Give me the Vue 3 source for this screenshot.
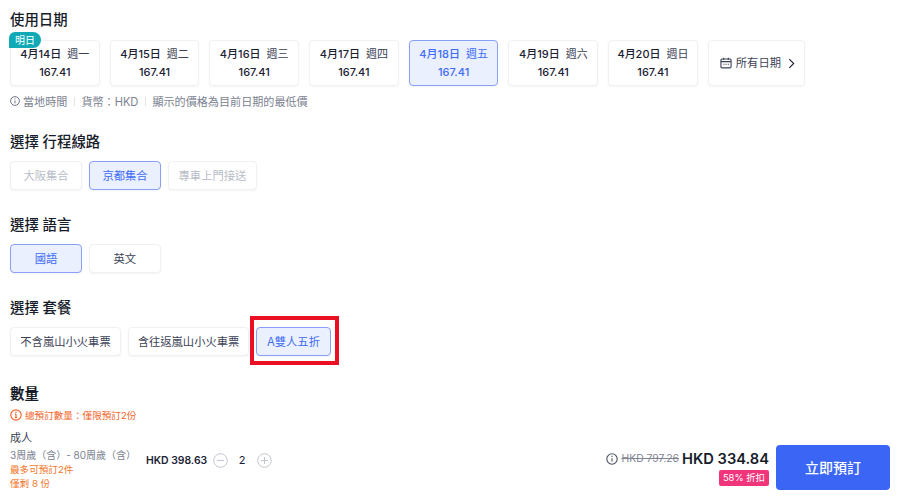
<template>
  <div class="page">
    <section class="date-section">
      <h2 class="title">使用日期</h2>
      <div class="dates">
        <div
          v-for="d in dates"
          :key="d.label"
          class="date-card"
          :class="{ selected: d.selected }"
        >
          <span v-if="d.tag" class="tag">{{ d.tag }}</span>
          <div class="date-label"><b>{{ d.label }}</b><span>{{ d.week }}</span></div>
          <div class="date-price">167.41</div>
        </div>
        <div class="date-card all-dates">
          <svg width="12" height="12" viewBox="0 0 13 13" fill="none" stroke="#3b4256" stroke-width="1.2">
            <rect x="1" y="2.2" width="11" height="9.6" rx="1.2" />
            <path d="M1 5h11M4 .8v2.4M9 .8v2.4" />
            <path d="M3.6 7.8h1.2M6 7.8h1.2M8.4 7.8h1.2" />
          </svg>
          <span>所有日期</span>
          <svg class="chev" width="7" height="11" viewBox="0 0 8 12" fill="none" stroke="#1b2133" stroke-width="1.3">
            <path d="M1.5 1l5 5-5 5" />
          </svg>
        </div>
      </div>
      <div class="note">
        <svg class="info" width="10" height="10" viewBox="0 0 10 10" fill="none" stroke="#6f7687" stroke-width="1">
          <circle cx="5" cy="5" r="4.4" />
          <path d="M5 4.4v3M5 2.4v1" />
        </svg>
        <span>當地時間</span><i></i><span>貨幣：HKD</span><i></i><span>顯示的價格為目前日期的最低價</span>
      </div>
    </section>

    <section class="option-section route">
      <h2 class="title">選擇 行程線路</h2>
      <div class="options">
        <button class="opt disabled w72">大阪集合</button>
        <button class="opt selected w73">京都集合</button>
        <button class="opt disabled w89">專車上門接送</button>
      </div>
    </section>

    <section class="option-section lang">
      <h2 class="title">選擇 語言</h2>
      <div class="options">
        <button class="opt selected w72">國語</button>
        <button class="opt w72">英文</button>
      </div>
    </section>

    <section class="option-section pack">
      <h2 class="title">選擇 套餐</h2>
      <div class="options">
        <button class="opt w111">不含嵐山小火車票</button>
        <button class="opt w122">含往返嵐山小火車票</button>
        <button class="opt selected w75 marked">A雙人五折<span class="red-box"></span></button>
      </div>
    </section>

    <section class="qty-section">
      <h2 class="title">數量</h2>
      <div class="warn">
        <svg width="12" height="12" viewBox="0 0 12 12" fill="none" stroke="#f4662b" stroke-width="1.2">
          <circle cx="6" cy="6" r="5.2" />
          <path d="M6 5.2v3.4M6 2.8v1.2M5 5.2h1M5 8.6h2" />
        </svg>
        <span>總預訂數量：僅限預訂2份</span>
      </div>
      <div class="qty-row">
        <div class="who">
          <div class="who-name">成人</div>
          <div class="who-age">3周歲（含）- 80周歲（含）</div>
          <div class="who-limit">最多可預訂2件</div>
          <div class="who-limit">僅剩 8 份</div>
        </div>
        <div class="unit">HKD 398.63</div>
        <svg class="step" width="15" height="15" viewBox="0 0 15 15" fill="none" stroke="#c3c7d0" stroke-width="1">
          <circle cx="7.5" cy="7.5" r="6.8" />
          <path d="M4 7.5h7" />
        </svg>
        <div class="count">2</div>
        <svg class="step" width="15" height="15" viewBox="0 0 15 15" fill="none" stroke="#c3c7d0" stroke-width="1">
          <circle cx="7.5" cy="7.5" r="6.8" />
          <path d="M4 7.5h7M7.5 4v7" />
        </svg>
        <div class="total">
          <div class="total-line">
            <svg width="12" height="12" viewBox="0 0 12 12" fill="none" stroke="#4a5060" stroke-width="1.1">
              <circle cx="6" cy="6" r="5.2" />
              <path d="M6 5.2v3.4M6 2.8v1.2" />
            </svg>
            <s>HKD 797.26</s>
            <strong>HKD 334.84</strong>
          </div>
          <div class="discount">58% 折扣</div>
        </div>
        <button class="book">立即預訂</button>
      </div>
    </section>
  </div>
</template>

<script setup>
const dates = [
  { label: '4月14日', week: '週一', tag: '明日' },
  { label: '4月15日', week: '週二' },
  { label: '4月16日', week: '週三' },
  { label: '4月17日', week: '週四' },
  { label: '4月18日', week: '週五', selected: true },
  { label: '4月19日', week: '週六' },
  { label: '4月20日', week: '週日' }
]
</script>

<style>
html, body {
  margin: 0;
  background: #fff;
}
</style>

<style scoped>
.page {
  width: 900px;
  height: 500px;
  overflow: hidden;
  box-sizing: border-box;
  padding: 11px 10px 0;
  font-family: Inter, "Noto Sans CJK TC", sans-serif;
  color: #1b2133;
}

.title {
  margin: 0;
  font-size: 14.4px;
  line-height: 18px;
  font-weight: 500;
  color: #171c2b;
}

.dates {
  display: flex;
  gap: 10px;
  margin-top: 11px;
}

.date-card {
  position: relative;
  box-sizing: border-box;
  width: 89.7px;
  height: 46px;
  border: 1px solid #f0f1f4;
  border-radius: 4px;
  box-shadow: 0 1px 2px rgba(30, 40, 70, 0.05);
  text-align: center;
  font-size: 11px;
  line-height: 18px;
  padding-top: 4px;
  background: #fff;
}

.date-card.selected {
  background: #ebf0ff;
  border-color: #88a0f8;
  color: #3e6bf5;
}

.date-label {
  display: flex;
  justify-content: center;
  gap: 6px;
  color: #3b4256;
}

.date-label b {
  font-weight: 500;
  color: #1b2133;
}

.selected .date-label,
.selected .date-label b {
  color: #3e6bf5;
}

.date-price {
  font-weight: 500;
}

.tag {
  position: absolute;
  left: -2px;
  top: -9px;
  width: 32px;
  height: 16px;
  border-radius: 6px 8px 8px 0;
  background: #10a9b5;
  color: #dff7f8;
  font-size: 10px;
  line-height: 16px;
  font-weight: 500;
}

.all-dates {
  width: 97px;
  display: flex;
  align-items: center;
  gap: 4px;
  padding: 0 0 0 11px;
  font-size: 11.3px;
  color: #3b4256;
}

.chev {
  margin-left: 3px;
}

.note {
  display: flex;
  align-items: center;
  margin-top: 8px;
  height: 14px;
  font-size: 11.1px;
  color: #7b8190;
}

.note .info {
  margin-right: 3px;
}

.note i {
  width: 1px;
  height: 9px;
  margin: 0 6.5px;
  background: #e1e3e8;
}

.route { margin-top: 25px; }
.lang { margin-top: 26.3px; }
.pack { margin-top: 26.3px; }

.options {
  display: flex;
  gap: 6.7px;
  margin-top: 9.7px;
}

.opt {
  box-sizing: border-box;
  height: 29px;
  padding: 0;
  border: 1px solid #f0f1f4;
  border-radius: 4px;
  box-shadow: 0 1px 2px rgba(30, 40, 70, 0.05);
  background: #fff;
  color: #3b4256;
  font-family: inherit;
  font-size: 11.3px;
}

.opt.selected {
  background: #ebf0ff;
  border-color: #88a0f8;
  color: #3e6bf5;
}

.opt.disabled {
  color: #b9bdc7;
}

.w72 { width: 72px; }
.w73 { width: 72.6px; }
.w75 { width: 75px; }
.w89 { width: 89px; }
.w111 { width: 111px; }
.w122 { width: 121.6px; }

.marked {
  position: relative;
}

.red-box {
  position: absolute;
  left: -7px;
  right: -9px;
  top: -12px;
  bottom: -10px;
  border: 4px solid #ea0f22;
}

.qty-section {
  margin-top: 29.3px;
}

.qty-section .title {
  font-weight: 600;
}

.warn {
  display: flex;
  align-items: center;
  gap: 3px;
  margin-top: 5px;
  height: 14px;
  font-size: 9.6px;
  color: #f4662b;
}

.qty-row {
  display: flex;
  align-items: flex-start;
  margin-top: 8px;
}

.who {
  width: 136px;
  font-size: 10px;
  line-height: 16px;
  color: #7b8190;
}

.who-name {
  font-size: 11px;
  line-height: 17px;
  color: #3b4256;
}

.who-limit {
  font-size: 9.6px;
  line-height: 14.5px;
  color: #f4762b;
}

.unit {
  width: 66.5px;
  margin-top: 23px;
  font-size: 10.4px;
  line-height: 15px;
  font-weight: 600;
  white-space: nowrap;
}

.count {
  width: 29px;
  margin-top: 23px;
  text-align: center;
  font-size: 11px;
  line-height: 15px;
}

.step {
  flex: none;
  margin-top: 23px;
}

.total {
  margin-left: auto;
  margin-right: 7px;
  margin-top: 20px;
  display: flex;
  flex-direction: column;
  align-items: flex-end;
  gap: 2px;
}

.total-line {
  display: flex;
  align-items: center;
  gap: 3px;
  height: 18px;
}

.total-line s {
  font-size: 10.4px;
  color: #7f8593;
}

.total-line strong {
  font-size: 14.7px;
  font-weight: 600;
  color: #171c2b;
}

.discount {
  background: #f0357a;
  color: #fff;
  font-size: 9.4px;
  line-height: 16px;
  padding: 0 4px;
  border-radius: 2px;
}

.book {
  width: 114px;
  height: 45px;
  margin-top: 15px;
  border: 0;
  border-radius: 4px;
  background: #3b66f5;
  color: #fff;
  font-family: inherit;
  font-size: 14px;
  font-weight: 500;
}
</style>
